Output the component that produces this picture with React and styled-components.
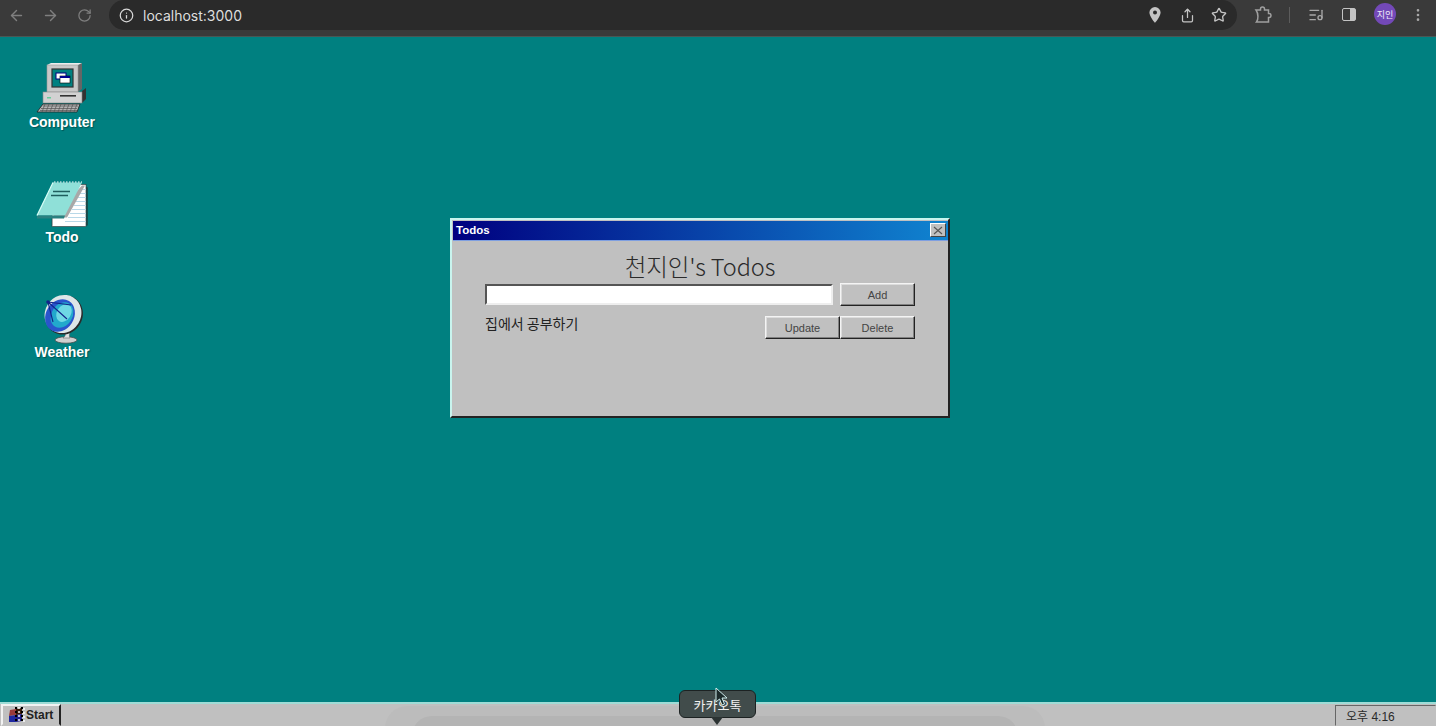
import React from "react";
import styled, { createGlobalStyle } from "styled-components";
import {
  ArrowLeft,
  ArrowRight,
  RotateCw,
  Info,
  Share,
  Star,
  ListMusic,
  EllipsisVertical,
} from "lucide-react";

const GlobalStyle = createGlobalStyle`
  html, body {
    margin: 0;
    padding: 0;
    height: 100%;
    overflow: hidden;
    background: #008080;
  }
  * { box-sizing: border-box; }
`;

const Page = styled.div`
  width: 1436px;
  height: 726px;
  display: flex;
  flex-direction: column;
  font-family: "Liberation Sans", "Noto Sans CJK KR", sans-serif;
`;

/* browser chrome */
const BrowserBar = styled.header`
  height: 37px;
  flex: none;
  display: flex;
  align-items: flex-start;
  background: #3a3a3a;
  border-bottom: 1px solid #4a5654;
`;

const NavButton = styled.div`
  width: ${(p) => p.$width || 34}px;
  height: 30px;
  flex: none;
  display: flex;
  align-items: center;
  justify-content: center;
  color: ${(p) => p.$color || "#7f7f7f"};
`;

const Omnibox = styled.div`
  width: 1128px;
  height: 30px;
  margin-left: 7px;
  margin-right: 9px;
  flex: none;
  display: flex;
  align-items: center;
  background: #2a2a2a;
  border-radius: 15px;
  padding: 0 2px 0 10px;
`;

const Url = styled.span`
  margin-left: 9px;
  font-family: "Inter", "Liberation Sans", sans-serif;
  font-size: 14px;
  color: #dedede;
  flex: 1;
`;

const OmniIcon = styled.div`
  width: 32px;
  height: 30px;
  display: flex;
  align-items: center;
  justify-content: center;
  color: #c4c4c4;
`;

const BarDivider = styled.div`
  width: 1px;
  height: 16px;
  margin: 7px 9px 0 9px;
  background: #5c5c5c;
  flex: none;
`;

const Avatar = styled.div`
  width: 22px;
  height: 22px;
  margin: 3px 7px 0 9px;
  flex: none;
  border-radius: 50%;
  background: #7349b8;
  color: #f0eaf8;
  font-size: 9px;
  font-family: "Noto Sans CJK KR", sans-serif;
  display: flex;
  align-items: center;
  justify-content: center;
`;

const SidePanelIcon = styled.div`
  width: 14px;
  height: 13px;
  margin: 8px 9px 0 9px;
  flex: none;
  border-radius: 2px;
  border: 1.5px solid #c4c4c4;
  background: linear-gradient(to right, #3a3a3a 55%, #c4c4c4 55%);
`;

/* desktop */
const Desktop = styled.main`
  position: relative;
  flex: 1;
  background: #008080;
  padding-top: 25px;
  overflow: hidden;
`;

const ShortcutList = styled.div`
  width: 124px;
  display: flex;
  flex-direction: column;
`;

const Shortcut = styled.div`
  height: ${(p) => p.$height}px;
  display: flex;
  flex-direction: column;
  align-items: center;
`;

const ShortcutLabel = styled.span`
  font-size: 14px;
  font-weight: 700;
  line-height: 16px;
  color: #fff;
  text-shadow: 1px 1px 1px rgba(0, 50, 50, 0.55);
`;

const Win = styled.section`
  position: absolute;
  left: 450px;
  top: 181px;
  width: 500px;
  height: 200px;
  display: flex;
  flex-direction: column;
  background: #c0c0c0;
  border: 2px solid;
  border-color: #c8f4ee #222 #222 #c8f4ee;
  padding: 1px 0 0 1px;
`;

const TitleBar = styled.div`
  height: 20px;
  flex: none;
  display: flex;
  align-items: center;
  justify-content: space-between;
  padding: 0 2px 1px 3px;
  background: linear-gradient(to right, #000080, #1084d0);
  border-bottom: 1px solid #7f9fe0;
`;

const TitleText = styled.span`
  font-size: 11.5px;
  font-weight: 700;
  color: #fff;
`;

const CloseButton = styled.div`
  width: 16px;
  height: 14px;
  background: #c0c0c0;
  border: 1px solid;
  border-color: #fff #444 #444 #fff;
  display: flex;
  align-items: center;
  justify-content: center;
`;

const WinBody = styled.div`
  flex: 1;
  padding: 11px 33px 0 32px;
  display: flex;
  flex-direction: column;
  align-items: stretch;
`;

const Heading = styled.h1`
  margin: 0;
  height: 29px;
  font-size: 23.5px;
  line-height: 29px;
  font-weight: 300;
  letter-spacing: -0.1px;
  text-align: center;
  color: #2a2a2a;
  font-family: "Noto Sans CJK KR", "Liberation Sans", sans-serif;
`;

const InputRow = styled.div`
  margin-top: 2px;
  display: flex;
  align-items: center;
  justify-content: space-between;
`;

const TextField = styled.input`
  width: 348px;
  height: 21px;
  background: #fff;
  border: 2px solid;
  border-color: #555 #eee #eee #555;
  outline: none;
`;

const Button = styled.button`
  width: 75px;
  height: 23px;
  padding: 0;
  background: #c0c0c0;
  color: #444;
  font-family: "Liberation Sans", sans-serif;
  font-size: 11px;
  border: 1px solid;
  border-color: #f4f4f4 #222 #222 #f4f4f4;
  box-shadow: inset -1px -1px 0 #808080, inset 1px 1px 0 #dcdcdc;
`;

const TodoRow = styled.div`
  margin-top: 10px;
  display: flex;
  align-items: flex-start;
`;

const TodoText = styled.span`
  flex: 1;
  margin-top: -3px;
  font-size: 14px;
  line-height: 20px;
  color: #222;
  font-family: "Noto Sans CJK KR", sans-serif;
`;

/* taskbar */
const Taskbar = styled.footer`
  position: relative;
  height: 24px;
  flex: none;
  display: flex;
  align-items: flex-end;
  justify-content: space-between;
  background: #c0c0c0;
  border-top: 2px solid #9fdcd6;
  overflow: hidden;
`;

const DockGhost = styled.div`
  position: absolute;
  left: 385px;
  top: 2px;
  width: 660px;
  height: 30px;
  background: #bcbcbc;
  border-radius: 22px 22px 0 0;
  &::after {
    content: "";
    position: absolute;
    left: 27px;
    right: 27px;
    top: 10px;
    bottom: 0;
    background: #b4b4b4;
    border-radius: 20px 20px 0 0;
  }
`;

const StartButton = styled.div`
  position: relative;
  width: 60px;
  height: 22px;
  margin-left: 1px;
  display: flex;
  align-items: center;
  gap: 0;
  padding-left: 5px;
  background: #c0c0c0;
  border: 2px solid;
  border-color: #f2f2f2 #222 transparent #f2f2f2;
  font-size: 12px;
  font-weight: 700;
  color: #222;
`;

const Clock = styled.div`
  position: relative;
  width: 101px;
  height: 21px;
  padding-left: 10px;
  display: flex;
  align-items: center;
  font-size: 12px;
  color: #2a2a2a;
  border: 1px solid;
  border-color: #666 transparent transparent #666;
  font-family: "Liberation Sans", "Noto Sans CJK KR", sans-serif;
`;

const DockTooltip = styled.div`
  position: absolute;
  left: 679px;
  top: 690px;
  width: 77px;
  height: 28px;
  display: flex;
  align-items: center;
  justify-content: center;
  background: #414c4b;
  border: 1px solid #1c2222;
  border-radius: 6px;
  color: #f0f0f0;
  font-size: 13px;
  font-family: "Noto Sans CJK KR", sans-serif;
  &::after {
    content: "";
    position: absolute;
    left: 31px;
    bottom: -8px;
    border-style: solid;
    border-width: 8px 6px 0 6px;
    border-color: #2b3333 transparent transparent transparent;
  }
`;

const Cursor = styled.svg`
  position: absolute;
  left: 715px;
  top: 687px;
`;

function ComputerIcon() {
  return (
    <svg width="52" height="52" viewBox="0 0 52 52">
      <polygon points="42,3 46,1 46,27 42,30" fill="#666" />
      <polygon points="11,3 15,1 46,1 42,3" fill="#ececec" />
      <rect x="11" y="3" width="31" height="27" fill="#c8c8c8" stroke="#9a9a9a" strokeWidth="0.6" />
      <rect x="16" y="7" width="21" height="18" fill="#008080" stroke="#333" strokeWidth="1.2" />
      <rect x="20" y="11" width="10" height="6" fill="#fff" stroke="#000080" strokeWidth="1" />
      <rect x="24" y="14" width="10" height="7" fill="#fff" stroke="#000" strokeWidth="0.6" />
      <rect x="24" y="14" width="10" height="2" fill="#000090" />
      <polygon points="46,29 50,26 50,37 46,41" fill="#333" />
      <rect x="7" y="30" width="39" height="11" fill="#d2d2d2" stroke="#888" strokeWidth="0.6" />
      <rect x="24" y="33" width="16" height="1.6" fill="#333" />
      <rect x="11" y="35" width="4" height="1.5" fill="#6c9" />
      <polygon points="7,42 44,42 41,50 1,50" fill="#b4b4b4" stroke="#222" strokeWidth="0.8" />
      <path
        d="M7 44H42M5 46.5H41M4 48.5H41M9 42L6 50M13 42L10 50M17 42L14 50M21 42L18 50M25 42L22 50M29 42L26 50M33 42L30 50M37 42L34 50M41 42L38 50"
        stroke="#555"
        strokeWidth="0.7"
        fill="none"
      />
    </svg>
  );
}

function NotepadIcon() {
  return (
    <svg width="54" height="50" viewBox="0 0 54 49">
      <polygon points="19,46 53,46 53,8 48,6" fill="#1c3a3a" opacity="0.7" />
      <rect x="17" y="5" width="34" height="42" fill="#fff" stroke="#333" strokeWidth="0.6" />
      <path
        d="M47 10H51M45 14H51M43 18H51M41 22H51M39 26H51M37 30H51M35 34H51M33 38H51M30 42H51"
        stroke="#b8d8e8"
        strokeWidth="1.2"
      />
      <polygon points="47,6 50,6 32,38 18,38 18,46 17,46 17,38" fill="#a8a8a8" />
      <polygon points="18,3 47,3 30,36 2,36" fill="#8fe0d8" />
      <polygon points="2,36 30,36 29,39 2,39" fill="#2a8080" />
      <path d="M18 3L2 36" stroke="#d8fff8" strokeWidth="1.2" />
      <path d="M19 2.500H47" stroke="#fff" strokeWidth="1" strokeDasharray="1.5 1.5" />
      <path d="M18 12H35M16 16H33" stroke="#1f5e5e" strokeWidth="1.6" />
    </svg>
  );
}

function DishIcon() {
  return (
    <svg width="56" height="51" viewBox="-2 1 56 51">
      <ellipse cx="30" cy="48" rx="11" ry="3.2" fill="#cfcfcf" stroke="#444" strokeWidth="0.7" />
      <path d="M27 38C30 41 30 44 27 46H34C33 44 33 42 35 39Z" fill="#e0e0e0" stroke="#555" strokeWidth="0.5" />
      <ellipse cx="28" cy="23" rx="18.500" ry="20" fill="#2b2b2b" transform="rotate(32 28 23)" />
      <ellipse cx="27" cy="22" rx="18" ry="19.500" fill="#dde6e8" transform="rotate(32 27 22)" />
      <ellipse cx="24" cy="23.500" rx="14" ry="17" fill="#2a55cc" transform="rotate(32 24 23.500)" />
      <ellipse cx="26" cy="23" rx="10.500" ry="13.500" fill="#22a8cc" transform="rotate(32 26 23)" />
      <ellipse cx="28" cy="21" rx="7" ry="9.500" fill="#6ed8e4" transform="rotate(32 28 21)" />
      <path d="M12 10L31 27M12 10L35 13M12 10L17 30" stroke="#12248a" strokeWidth="1.1" fill="none" />
      <circle cx="12" cy="10" r="1.800" fill="#12248a" />
    </svg>
  );
}

function ExtensionIcon() {
  return (
    <svg width="18" height="18" viewBox="0 0 18 18" fill="none" stroke="#a0a0a0" strokeWidth="1.500">
      <path d="M2 4H6.500V3a2 2 0 0 1 4 0V4H14.500V7.500H15a2 2 0 0 1 0 4H14.500V16H2.500C4.500 13.500 4.500 7.500 2 4Z" />
    </svg>
  );
}

function StartLogo() {
  return (
    <svg width="18" height="17" viewBox="0 0 18 17">
      <polygon points="2,3 8,2 8,8 1,9" fill="#9a3b3b" />
      <polygon points="8,2 14,1 14,7 8,8" fill="#3a1a0a" />
      <polygon points="1,9 8,8 8,15 1,15" fill="#2028a0" />
      <polygon points="8,8 14,7 14,14 8,15" fill="#20208a" />
      <path d="M8 0V16M14 0V16" stroke="#000" strokeWidth="2" strokeDasharray="2 2" />
      <path d="M11 0V16M16 1V15" stroke="#fff" strokeWidth="1.4" strokeDasharray="2 2" />
    </svg>
  );
}

export default function App() {
  return (
    <Page>
      <GlobalStyle />
      <BrowserBar>
        <NavButton $width={33}>
          <ArrowLeft size={17} />
        </NavButton>
        <NavButton $width={34}>
          <ArrowRight size={17} />
        </NavButton>
        <NavButton $width={35}>
          <RotateCw size={15} />
        </NavButton>
        <Omnibox>
          <Info size={15} color="#d8d8d8" />
          <Url>localhost:3000</Url>
          <OmniIcon>
            <svg width="14" height="16" viewBox="0 0 14 16">
              <path
                fillRule="evenodd"
                fill="#c4c4c4"
                d="M7 0a5.6 5.6 0 0 1 5.6 5.6C12.6 9.6 7 16 7 16S1.400 9.600 1.400 5.600A5.600 5.600 0 0 1 7 0Zm0 3.600a2 2 0 1 0 0 4a2 2 0 0 0 0-4Z"
              />
            </svg>
          </OmniIcon>
          <OmniIcon>
            <Share size={15} />
          </OmniIcon>
          <OmniIcon>
            <Star size={16} />
          </OmniIcon>
        </Omnibox>
        <NavButton $color="#a8a8a8">
          <ExtensionIcon />
        </NavButton>
        <BarDivider />
        <NavButton $color="#a8a8a8">
          <ListMusic size={16} />
        </NavButton>
        <SidePanelIcon />
        <Avatar>지인</Avatar>
        <NavButton $color="#a8a8a8" $width={30}>
          <EllipsisVertical size={16} />
        </NavButton>
      </BrowserBar>

      <Desktop>
        <ShortcutList>
          <Shortcut $height={117}>
            <ComputerIcon />
            <ShortcutLabel>Computer</ShortcutLabel>
          </Shortcut>
          <Shortcut $height={114}>
            <NotepadIcon />
            <ShortcutLabel>Todo</ShortcutLabel>
          </Shortcut>
          <Shortcut $height={115}>
            <DishIcon />
            <ShortcutLabel>Weather</ShortcutLabel>
          </Shortcut>
        </ShortcutList>

        <Win>
          <TitleBar>
            <TitleText>Todos</TitleText>
            <CloseButton>
              <svg width="10" height="9" viewBox="0 0 10 9">
                <path d="M1 1L9 8M9 1L1 8" stroke="#555" strokeWidth="1.1" />
              </svg>
            </CloseButton>
          </TitleBar>
          <WinBody>
            <Heading>천지인's Todos</Heading>
            <InputRow>
              <TextField />
              <Button>Add</Button>
            </InputRow>
            <TodoRow>
              <TodoText>집에서 공부하기</TodoText>
              <Button>Update</Button>
              <Button>Delete</Button>
            </TodoRow>
          </WinBody>
        </Win>
      </Desktop>

      <Taskbar>
        <DockGhost />
        <StartButton>
          <StartLogo />
          Start
        </StartButton>
        <Clock>오후 4:16</Clock>
      </Taskbar>

      <DockTooltip>카카오톡</DockTooltip>
      <Cursor width="14" height="20" viewBox="0 0 14 20">
        <path d="M1 1L1 15L4.500 12L7 18L9.500 17L7 11L12 11Z" fill="#1c2a2a" stroke="#cfeeee" strokeWidth="1" />
      </Cursor>
    </Page>
  );
}
